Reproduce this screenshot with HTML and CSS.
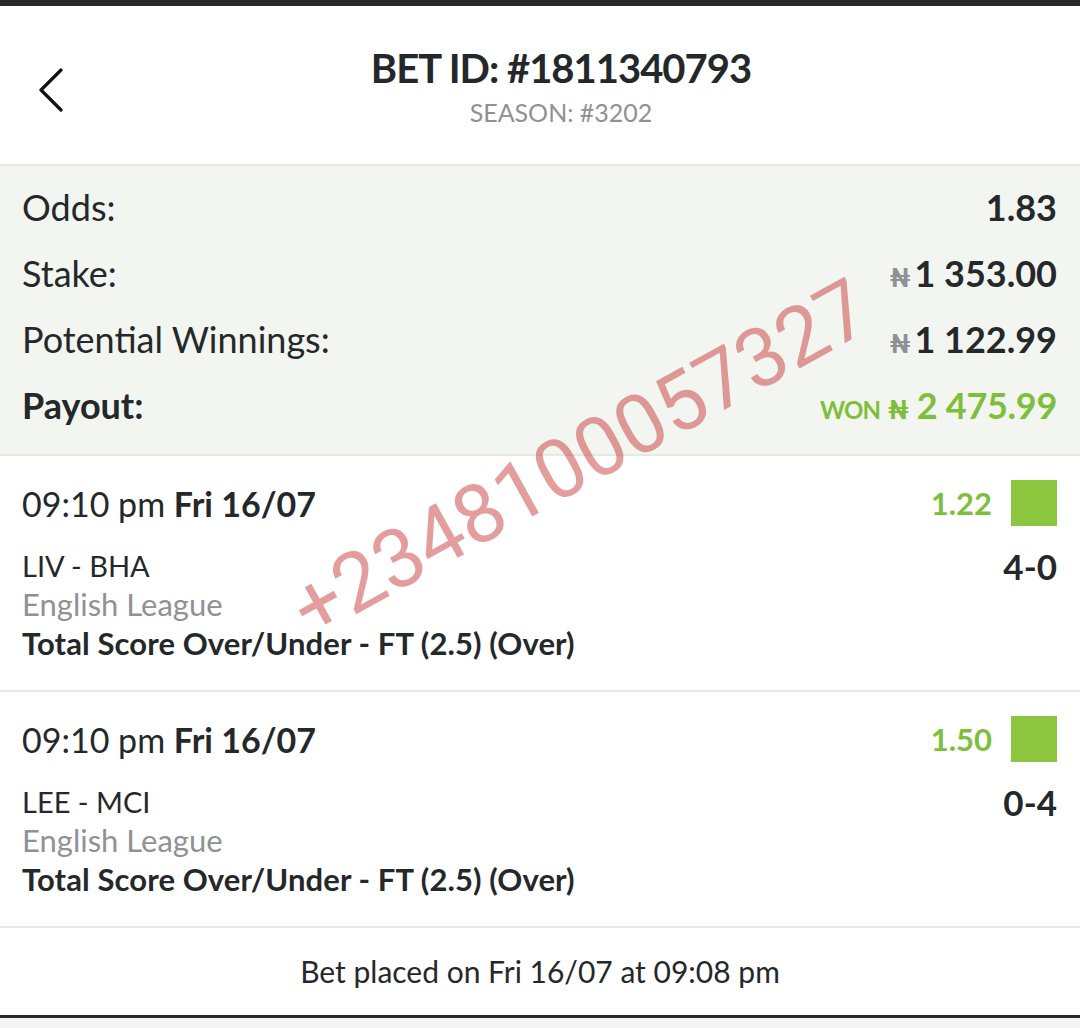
FILE: index.html
```html
<!DOCTYPE html>
<html lang="en">
<head>
    <meta charset="UTF-8">
    <meta name="viewport" content="width=device-width, initial-scale=1.0">
    <title>Bet Details</title>
    <link rel="stylesheet" href="styles.css">
</head>
<body>
    <div class="screen">
        <div class="topbar"></div>

        <header class="header">
            <a class="back" href="#">
                <svg width="26" height="44" viewBox="0 0 26 44">
                    <path d="M23 2 L3 22 L23 42" fill="none" stroke="#111" stroke-width="3.2" stroke-linecap="round" stroke-linejoin="round"/>
                </svg>
            </a>
            <div class="titles">
                <h1>BET ID: #1811340793</h1>
                <p class="season">SEASON: #3202</p>
            </div>
        </header>

        <section class="summary">
            <div class="row">
                <span>Odds:</span>
                <span class="val">1.83</span>
            </div>
            <div class="row">
                <span>Stake:</span>
                <span class="val"><span class="naira">₦</span>1 353.00</span>
            </div>
            <div class="row">
                <span>Potential Winnings:</span>
                <span class="val"><span class="naira">₦</span>1 122.99</span>
            </div>
            <div class="row payout">
                <span>Payout:</span>
                <span class="val won"><span class="won-label">WON</span> <span class="naira">₦</span> 2 475.99</span>
            </div>
        </section>

        <section class="sel">
            <div class="sel-top">
                <span class="time">09:10 pm <b>Fri 16/07</b></span>
                <span class="odd">1.22 <i class="status"></i></span>
            </div>
            <div class="sel-match">
                <span>LIV - BHA</span>
                <b>4-0</b>
            </div>
            <div class="league">English League</div>
            <div class="market">Total Score Over/Under - FT (2.5) (Over)</div>
        </section>

        <section class="sel">
            <div class="sel-top">
                <span class="time">09:10 pm <b>Fri 16/07</b></span>
                <span class="odd">1.50 <i class="status"></i></span>
            </div>
            <div class="sel-match">
                <span>LEE - MCI</span>
                <b>0-4</b>
            </div>
            <div class="league">English League</div>
            <div class="market">Total Score Over/Under - FT (2.5) (Over)</div>
        </section>

        <footer class="placed">Bet placed on Fri 16/07 at 09:08 pm</footer>
        <div class="bottombar"></div>

        <div class="watermark">+2348100057327</div>
    </div>
</body>
</html>
```

FILE: styles.css
```css
body {
    margin: 0;
    background: #f4f4f4;
    font-family: Lato, "Noto Sans", sans-serif;
    color: #25282b;
}
.screen {
    position: relative;
    width: 1080px;
    background: #fff;
    overflow: hidden;
}
.topbar {
    height: 6px;
    background: #262a2d;
}
.header {
    display: grid;
    grid-template-columns: 86px 1fr 44px;
    padding: 37px 0;
    border-bottom: 2px solid #e6e8e4;
}
.back {
    display: block;
    align-self: start;
    padding-left: 38px;
    margin-top: 25px;
    line-height: 0;
}
.titles {
    text-align: center;
}
.titles h1 {
    margin: 0;
    font-size: 40px;
    font-weight: 700;
    line-height: 50px;
    letter-spacing: -1px;
}
.season {
    margin: 4px 0 0;
    font-size: 25px;
    line-height: 30px;
    color: #8f9295;
}
.summary {
    background: #f3f5f0;
    padding: 8px 23px 16px 22px;
    border-bottom: 2px solid #e6e8e4;
}
.row {
    display: flex;
    justify-content: space-between;
    align-items: center;
    height: 66px;
    font-size: 36px;
    line-height: 1;
}
.val {
    font-weight: 700;
}
.naira {
    font-family: Roboto, "DejaVu Sans", sans-serif;
    font-size: 25px;
    font-weight: 700;
    color: #8f9295;
    margin-right: 4px;
}
.payout {
    font-weight: 700;
}
.won {
    color: #7dbf3b;
    letter-spacing: -0.3px;
}
.won .naira {
    color: #7dbf3b;
    margin-right: 0;
}
.won-label {
    font-size: 24px;
    letter-spacing: -1px;
}
.sel {
    padding: 24px 23px 27px 22px;
    border-bottom: 2px solid #e6e8e4;
}
.sel-top {
    display: flex;
    justify-content: space-between;
    align-items: center;
    height: 46px;
}
.time {
    font-size: 34px;
}
.odd {
    display: flex;
    align-items: center;
    gap: 19px;
    font-size: 31px;
    font-weight: 700;
    color: #7dbf3b;
}
.status {
    display: block;
    width: 46px;
    height: 46px;
    background: #8cc63f;
}
.sel-match {
    display: flex;
    justify-content: space-between;
    align-items: center;
    height: 39px;
    margin-top: 20px;
    font-size: 29px;
}
.sel-match b {
    font-size: 35px;
}
.league {
    font-size: 31px;
    line-height: 39px;
    color: #8f9295;
}
.market {
    font-size: 31px;
    line-height: 39px;
    font-weight: 700;
    letter-spacing: 0.1px;
}
.placed {
    text-align: center;
    font-size: 30px;
    line-height: 87px;
}
.bottombar {
    height: 3px;
    background: #262a2d;
}
.watermark {
    position: absolute;
    left: 580px;
    top: 458px;
    transform: translate(-50%, -50%) rotate(-29deg);
    font-family: Roboto, sans-serif;
    font-size: 82px;
    color: rgba(200, 60, 60, 0.5);
    white-space: nowrap;
    pointer-events: none;
}
```
